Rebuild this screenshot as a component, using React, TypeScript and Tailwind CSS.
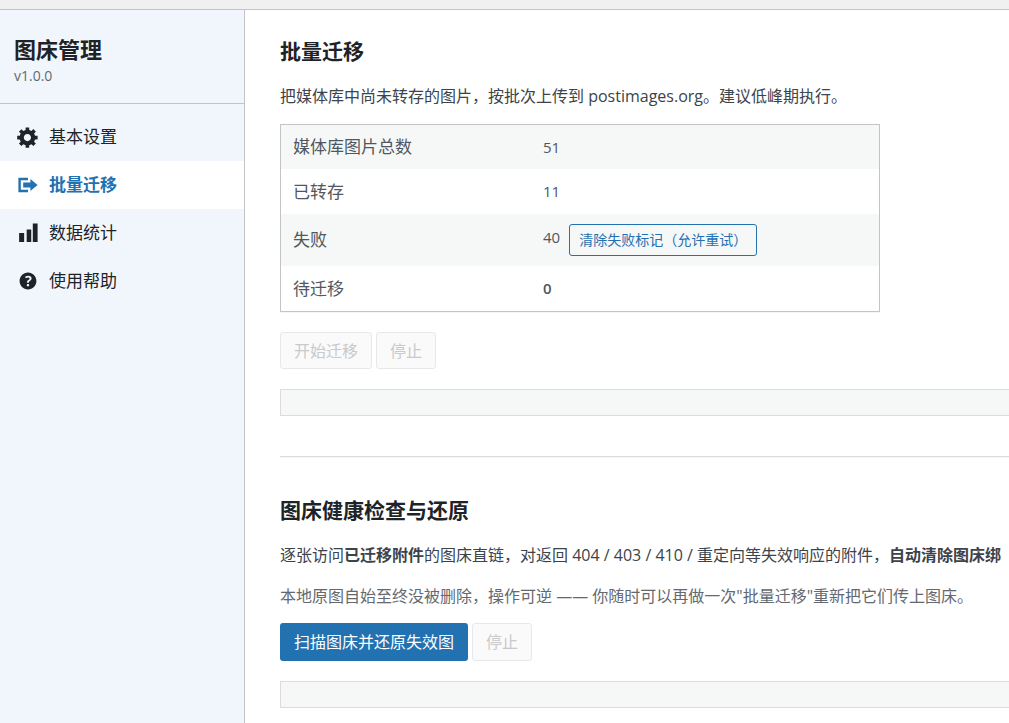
import type { ReactNode } from "react";

type IconProps = { d: string };

function Icon({ d }: IconProps) {
  return (
    <svg viewBox="0 0 20 20" className="size-6 shrink-0 fill-current" aria-hidden="true">
      <path d={d} />
    </svg>
  );
}

const icons = {
  gear: "M18 12h-2.18c-.17.7-.44 1.35-.81 1.93l1.54 1.54-2.1 2.1-1.54-1.54c-.58.36-1.23.63-1.91.79V19H8v-2.18c-.68-.16-1.33-.43-1.91-.79l-1.54 1.54-2.12-2.12 1.54-1.54c-.36-.58-.63-1.23-.79-1.91H1V9.03h2.17c.16-.7.44-1.35.8-1.94L2.43 5.55l2.1-2.1 1.54 1.54c.58-.37 1.24-.64 1.93-.81V2h3v2.18c.68.16 1.33.43 1.91.79l1.54-1.54 2.12 2.12-1.54 1.54c.36.59.64 1.24.8 1.94H18V12zm-8.5 1.5c1.66 0 3-1.34 3-3s-1.34-3-3-3-3 1.34-3 3 1.34 3 3 3z",
  migrate: "M4 6h6V4H2v12.01h8V14H4V6zm2 2h6V5l6 5-6 5v-3H6V8z",
  chart: "M18 17.5V2h-4v15.5h4zm-5.3 0V7H8.9v10.5h3.8zm-5.9 0V10H2.6v7.5h4.2z",
  help: "M17 10c0-3.87-3.14-7-7-7-3.87 0-7 3.13-7 7s3.13 7 7 7c3.86 0 7-3.13 7-7zm-6.3 1.48H9.14v-.43c0-.38.08-.7.24-.98s.46-.57.88-.89c.41-.29.68-.53.81-.71.14-.18.2-.39.2-.62 0-.25-.09-.44-.28-.58-.19-.13-.45-.19-.79-.19-.58 0-1.25.19-2 .57l-.64-1.28c.87-.49 1.8-.74 2.77-.74.81 0 1.45.2 1.92.58.48.39.71.91.71 1.55 0 .43-.09.8-.29 1.11-.19.32-.57.67-1.11 1.06-.38.28-.61.49-.71.63-.1.15-.15.34-.15.57v.35zm-1.47 2.74c-.18-.17-.27-.42-.27-.73 0-.33.08-.58.26-.75s.43-.25.77-.25c.32 0 .57.09.75.26s.27.42.27.74c0 .3-.09.55-.27.72-.18.18-.43.27-.75.27-.33 0-.58-.09-.76-.26z",
};

const navItems = [
  { label: "基本设置", icon: icons.gear, active: false },
  { label: "批量迁移", icon: icons.migrate, active: true },
  { label: "数据统计", icon: icons.chart, active: false },
  { label: "使用帮助", icon: icons.help, active: false },
];

function StatRow({ label, tall, children }: { label: string; tall?: boolean; children: ReactNode }) {
  return (
    <tr className={tall ? "h-[52px] odd:bg-[#f6f7f7]" : "h-[45px] first:h-11 odd:bg-[#f6f7f7]"}>
      <th scope="row" className="w-[250px] pl-3 text-left text-[17px] font-normal">
        {label}
      </th>
      <td className="pl-3 text-[15px]">{children}</td>
    </tr>
  );
}

function DisabledButton({ children }: { children: ReactNode }) {
  return (
    <button
      disabled
      className="min-h-[37px] rounded-[3px] border border-[#e8e8e9] bg-[#fafafa] px-[13px] text-base text-[#c8c9cb]"
    >
      {children}
    </button>
  );
}

function ProgressTrack({ label }: { label: string }) {
  return (
    <div
      role="progressbar"
      aria-label={label}
      aria-valuenow={0}
      className="mt-5 h-[27px] border border-[#dcdcde] bg-[#f6f7f7]"
    />
  );
}

export default function App() {
  return (
    <div className="flex min-h-screen flex-col bg-[#f0f0f1] pt-[9px] font-['Open_Sans','Noto_Sans_CJK_SC',sans-serif] text-base text-[#3c434a]">
      <div className="flex grow overflow-hidden border-t border-[#c3c4c7] bg-white">
        <aside className="w-[245px] shrink-0 border-r border-[#c3c4c7] bg-[#f0f6fc]">
          <header className="border-b border-[#c3c4c7] px-3.5 pt-[23px] pb-4">
            <h1 className="text-[22px] leading-8 font-semibold text-[#1d2327]">图床管理</h1>
            <p className="text-sm leading-[22px] text-[#646970]">v1.0.0</p>
          </header>
          <nav className="pt-[9px]">
            {navItems.map((item) => (
              <a
                key={item.label}
                href="#"
                aria-current={item.active ? "page" : undefined}
                className={
                  item.active
                    ? "flex h-12 items-center gap-[9px] bg-white px-4 text-[17px] font-semibold text-[#2271b1]"
                    : "flex h-12 items-center gap-[9px] px-4 text-[17px] text-[#1d2327]"
                }
              >
                <Icon d={item.icon} />
                {item.label}
              </a>
            ))}
          </nav>
        </aside>

        <main className="min-w-0 grow overflow-hidden pt-[25px] pl-[35px]">
          <div className="min-w-[960px] whitespace-nowrap">
            <section>
              <h2 className="text-[21px] leading-8 font-semibold text-[#1d2327]">批量迁移</h2>
              <p className="mt-[17px] leading-6">
                把媒体库中尚未转存的图片，按批次上传到 postimages.org。建议低峰期执行。
              </p>
              <div className="mt-4 w-[600px] border border-[#c3c4c7] shadow-[0_1px_1px_rgba(0,0,0,0.04)]">
                <table className="w-full table-fixed border-collapse text-[#50575e]">
                  <tbody>
                    <StatRow label="媒体库图片总数">51</StatRow>
                    <StatRow label="已转存">11</StatRow>
                    <StatRow label="失败" tall>
                      <div className="flex gap-[9px]">
                        <span className="leading-[26px]">40</span>
                        <button className="h-8 rounded-[3px] border border-[#2271b1] bg-[#f6f7f7] px-[9px] text-sm text-[#2271b1]">
                          清除失败标记（允许重试）
                        </button>
                      </div>
                    </StatRow>
                    <StatRow label="待迁移">
                      <strong className="font-semibold">0</strong>
                    </StatRow>
                  </tbody>
                </table>
              </div>
              <div className="mt-5 flex gap-1">
                <DisabledButton>开始迁移</DisabledButton>
                <DisabledButton>停止</DisabledButton>
              </div>
              <ProgressTrack label="迁移进度" />
            </section>

            <hr className="mt-10 border-t border-b border-t-[#dcdcde] border-b-[#f6f7f7]" />

            <section className="mt-9">
              <h2 className="text-[21px] leading-8 font-semibold text-[#1d2327]">图床健康检查与还原</h2>
              <p className="mt-[17px] leading-6">
                逐张访问<strong className="font-semibold">已迁移附件</strong>的图床直链，对返回 404 / 403 / 410 /
                重定向等失效响应的附件，<strong className="font-semibold">自动清除图床绑</strong>
              </p>
              <p className="mt-[17px] leading-6 text-[#646970]">
                本地原图自始至终没被删除，操作可逆 —— 你随时可以再做一次"批量迁移"重新把它们传上图床。
              </p>
              <div className="mt-[15px] flex gap-1">
                <button className="h-[38px] rounded-[3px] bg-[#2271b1] px-3.5 text-base text-white">
                  扫描图床并还原失效图
                </button>
                <DisabledButton>停止</DisabledButton>
              </div>
              <ProgressTrack label="扫描进度" />
            </section>
          </div>
        </main>
      </div>
    </div>
  );
}
